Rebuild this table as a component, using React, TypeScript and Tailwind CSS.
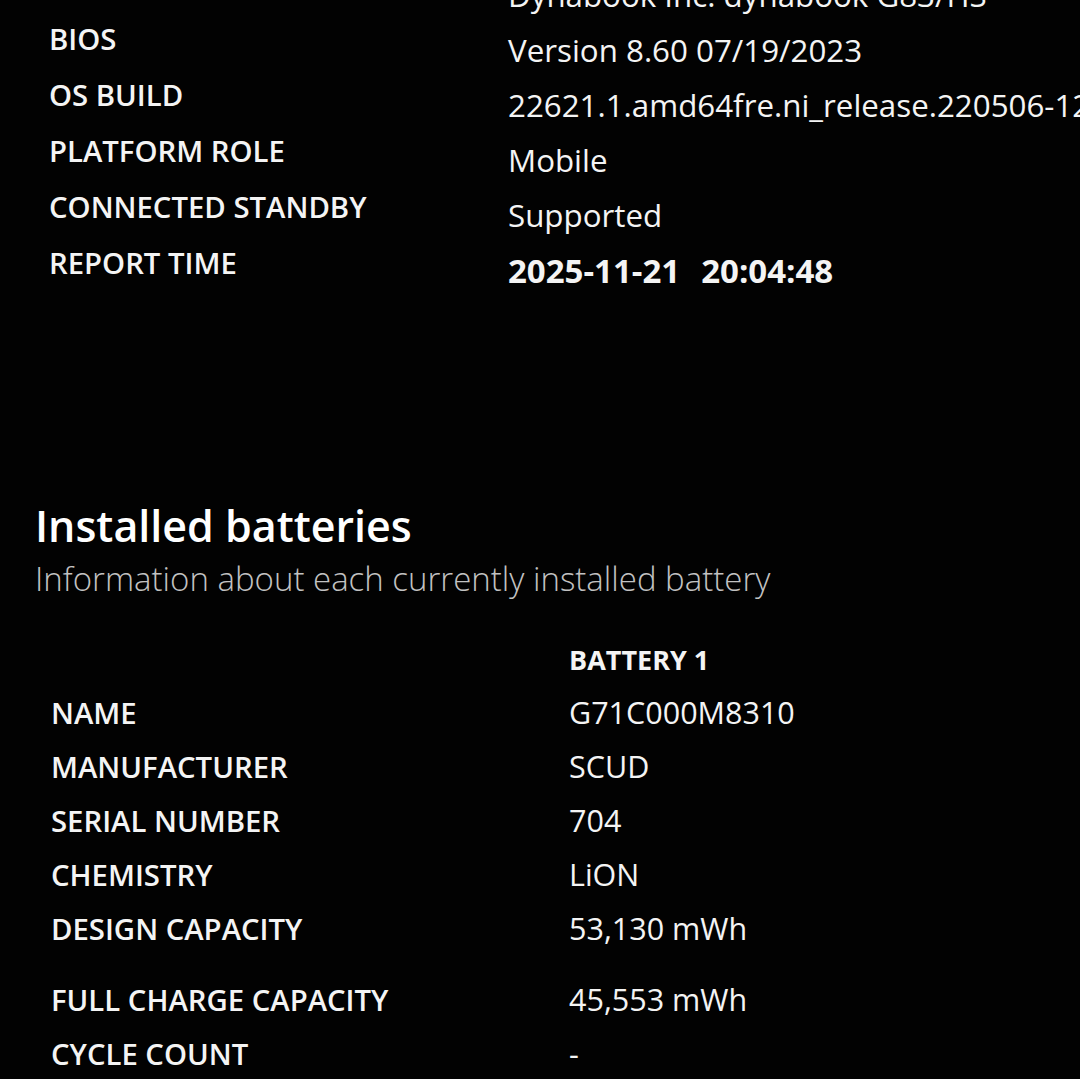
import React from "react";

const topRows: { label: string; value: string; bold?: boolean }[] = [
  { label: "", value: "Dynabook Inc. dynabook G83/HS" },
  { label: "BIOS", value: "Version 8.60 07/19/2023" },
  { label: "OS BUILD", value: "22621.1.amd64fre.ni_release.220506-1250" },
  { label: "PLATFORM ROLE", value: "Mobile" },
  { label: "CONNECTED STANDBY", value: "Supported" },
  { label: "REPORT TIME", value: "", bold: true },
];

const batteryRows: { label: string; value: string; extra?: boolean }[] = [
  { label: "NAME", value: "G71C000M8310" },
  { label: "MANUFACTURER", value: "SCUD" },
  { label: "SERIAL NUMBER", value: "704" },
  { label: "CHEMISTRY", value: "LiON" },
  { label: "DESIGN CAPACITY", value: "53,130 mWh" },
  { label: "FULL CHARGE CAPACITY", value: "45,553 mWh", extra: true },
  { label: "CYCLE COUNT", value: "-" },
];

export default function App() {
  return (
    <div
      className="w-[1080px] h-[1079px] overflow-hidden bg-[#020202] text-[#f4f4f4]"
      style={{ fontFamily: '"Open Sans", "Noto Sans", sans-serif' }}
    >
      {/* System info */}
      <div className="flex pl-[49px]">
        <div className="w-[459px] shrink-0 -mt-[45px] flex flex-col">
          {topRows.map((r, i) => (
            <div
              key={i}
              className="h-[56px] leading-[56px] text-[29.3px] font-semibold whitespace-nowrap"
            >
              {r.label}
            </div>
          ))}
        </div>
        <div className="-mt-[32px] flex flex-col">
          {topRows.map((r, i) =>
            r.bold ? (
              <div
                key={i}
                className="h-[55px] leading-[55px] text-[33px] font-bold whitespace-nowrap flex"
              >
                <span>2025-11-21</span>
                <span className="ml-[21px]">20:04:48</span>
              </div>
            ) : (
              <div
                key={i}
                className="h-[55px] leading-[55px] text-[31.3px] whitespace-nowrap"
              >
                {r.value}
              </div>
            )
          )}
        </div>
      </div>

      {/* Installed batteries */}
      <div className="pl-[35px] mt-[202px]">
        <h1 className="text-[43px] leading-[52px] font-semibold text-white">
          Installed batteries
        </h1>
        <p className="mt-[6px] text-[33px] leading-[42px] font-light text-[#c2c2c2] whitespace-nowrap">
          Information about each currently installed battery
        </p>
      </div>

      <div className="pl-[51px] mt-[33px]">
        <div className="flex h-[52px] leading-[54px]">
          <div className="w-[518px] shrink-0" />
          <div className="text-[27px] font-bold">BATTERY 1</div>
        </div>
        {batteryRows.map((r) => (
          <div
            key={r.label}
            className={`flex items-baseline h-[54px] ${r.extra ? "mt-[17px]" : ""}`}
          >
            <div className="w-[518px] shrink-0 leading-[54px] text-[29.3px] font-semibold whitespace-nowrap">
              {r.label}
            </div>
            <div className="leading-[54px] text-[30.5px] whitespace-nowrap">
              {r.value}
            </div>
          </div>
        ))}
      </div>
    </div>
  );
}
